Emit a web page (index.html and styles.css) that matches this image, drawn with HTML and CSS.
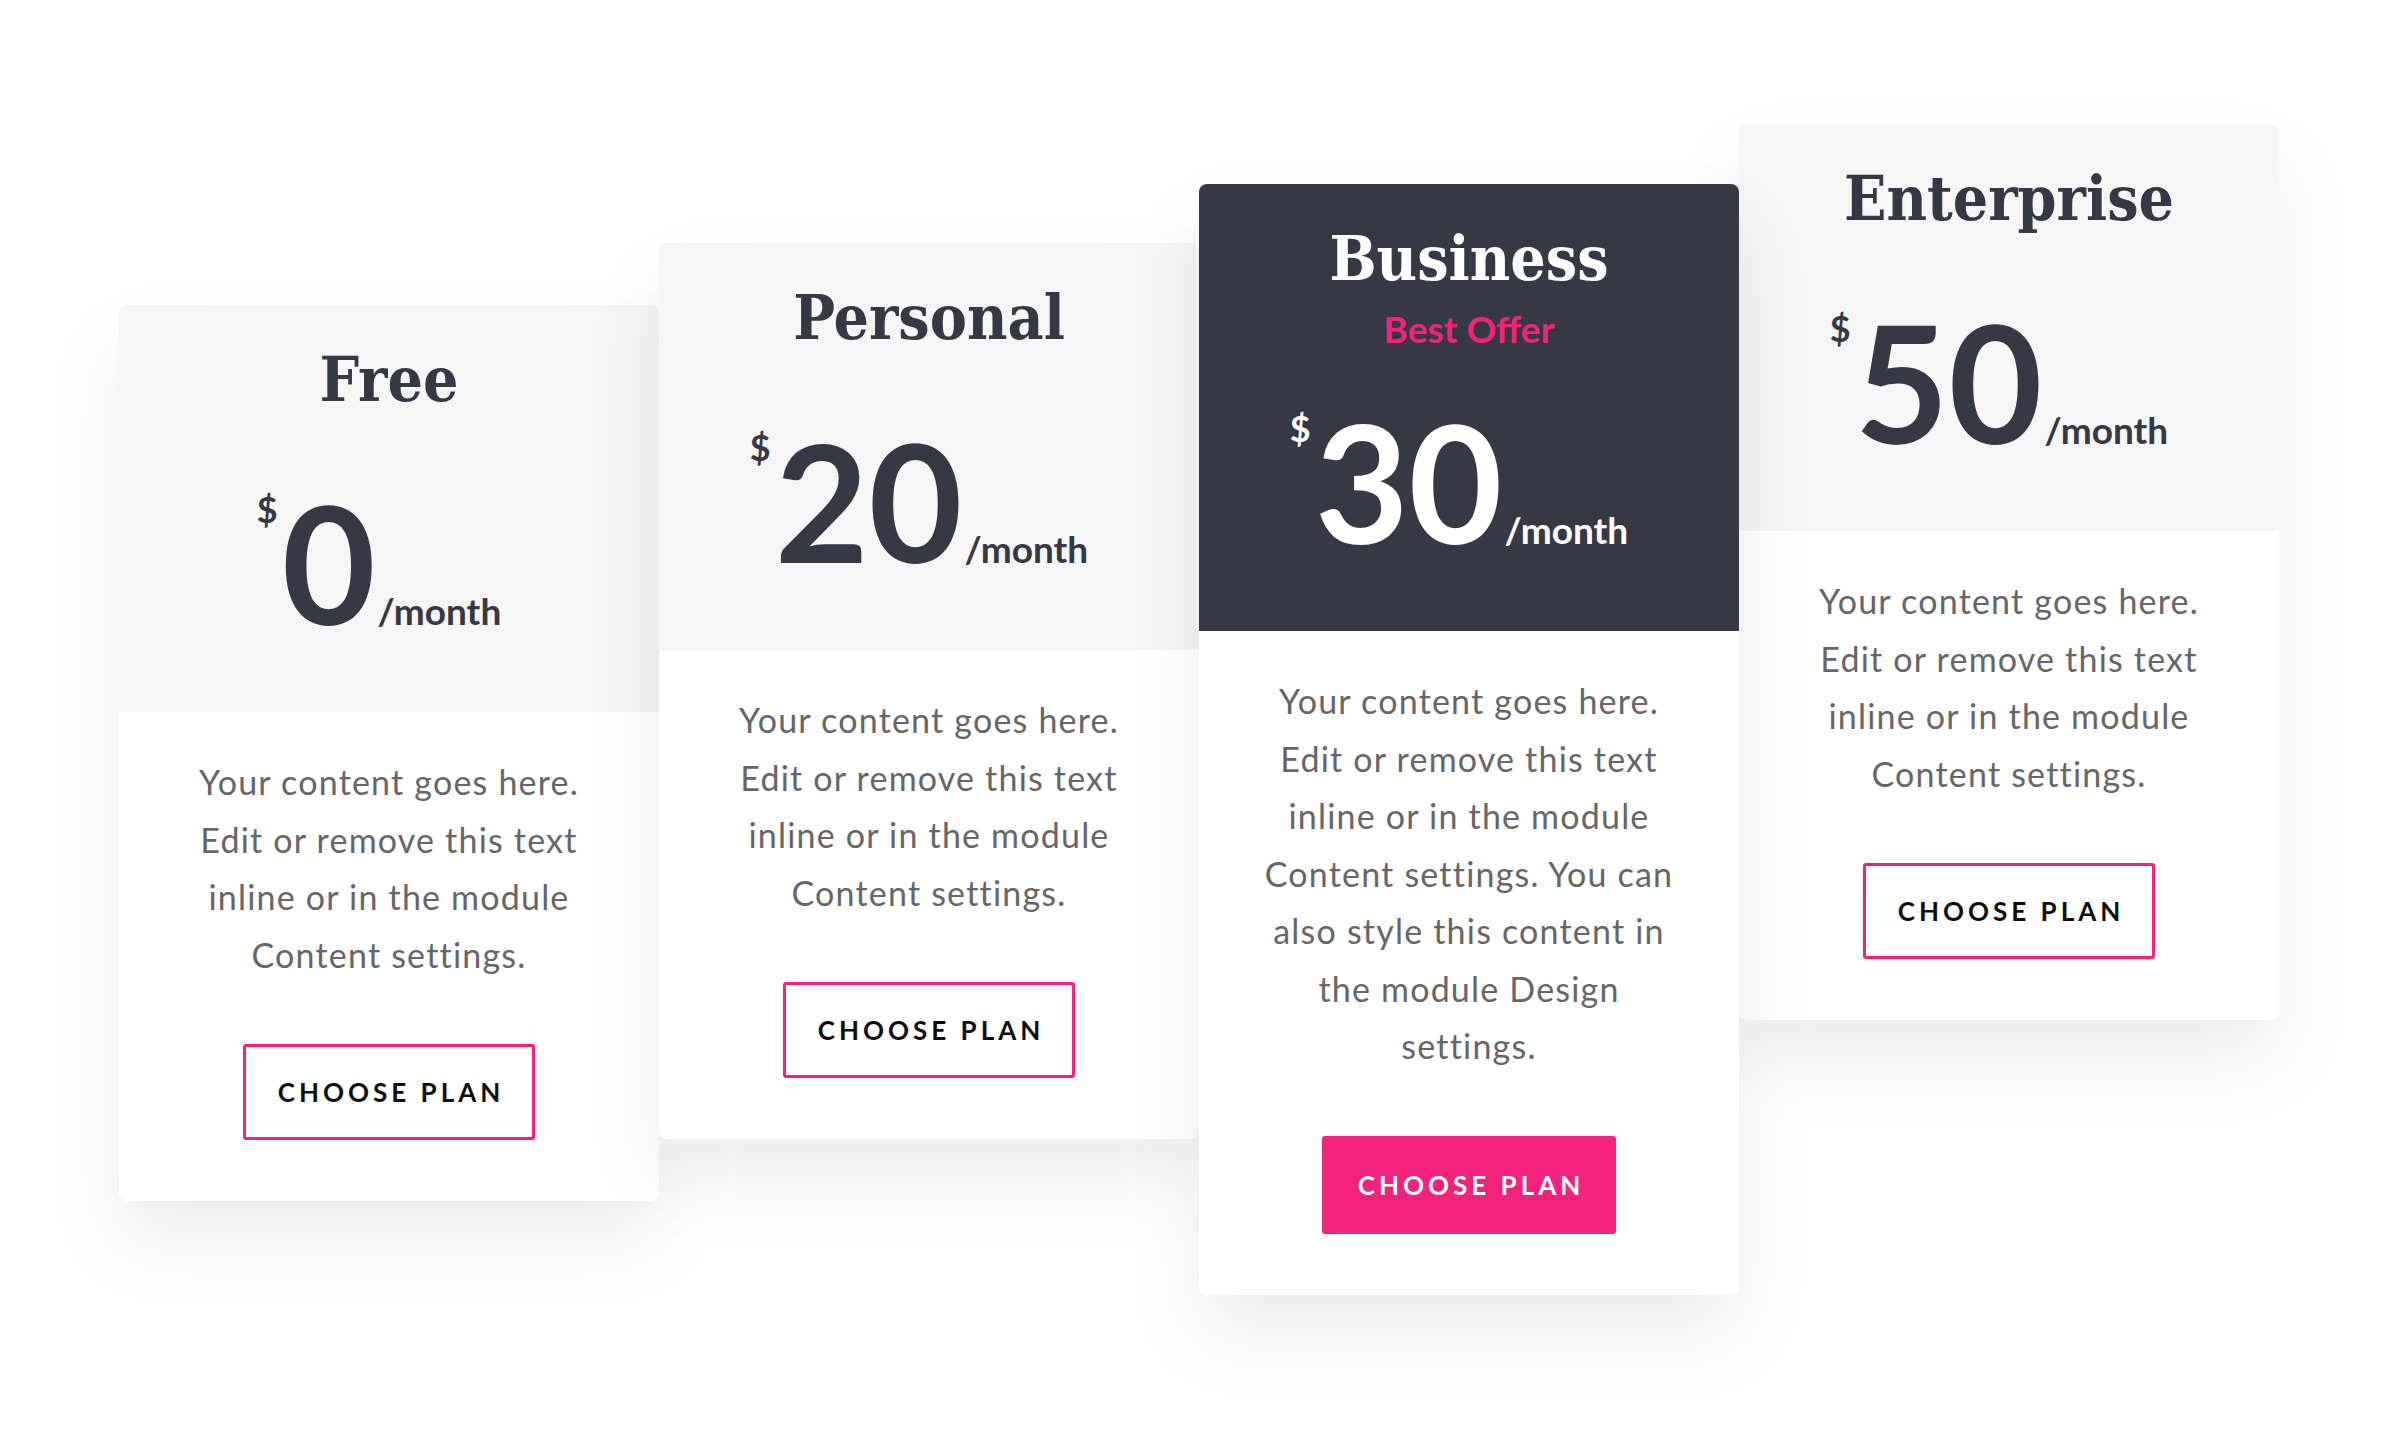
FILE: index.html
```html
<!DOCTYPE html>
<html lang="en">
<head>
<meta charset="utf-8">
<title>Pricing</title>
<link rel="stylesheet" href="styles.css">
</head>
<body>
<main class="pricing">
  <section class="card card-free">
    <header class="card-head">
      <h2 class="plan-title">Free</h2>
      <div class="price"><span class="currency">$</span><span class="amount">0</span><span class="period">/month</span></div>
    </header>
    <div class="card-body">
      <p class="desc">Your content goes here.<br>Edit or remove this text<br>inline or in the module<br>Content settings.</p>
      <a class="btn" href="#">CHOOSE PLAN</a>
    </div>
  </section>
  <section class="card card-personal">
    <header class="card-head">
      <h2 class="plan-title">Personal</h2>
      <div class="price"><span class="currency">$</span><span class="amount">20</span><span class="period">/month</span></div>
    </header>
    <div class="card-body">
      <p class="desc">Your content goes here.<br>Edit or remove this text<br>inline or in the module<br>Content settings.</p>
      <a class="btn" href="#">CHOOSE PLAN</a>
    </div>
  </section>
  <section class="card card-business featured">
    <header class="card-head">
      <h2 class="plan-title">Business</h2>
      <div class="subtitle">Best Offer</div>
      <div class="price"><span class="currency">$</span><span class="amount">30</span><span class="period">/month</span></div>
    </header>
    <div class="card-body">
      <p class="desc">Your content goes here.<br>Edit or remove this text<br>inline or in the module<br>Content settings. You can<br>also style this content in<br>the module Design<br>settings.</p>
      <a class="btn btn-filled" href="#">CHOOSE PLAN</a>
    </div>
  </section>
  <section class="card card-enterprise">
    <header class="card-head">
      <h2 class="plan-title">Enterprise</h2>
      <div class="price"><span class="currency">$</span><span class="amount">50</span><span class="period">/month</span></div>
    </header>
    <div class="card-body">
      <p class="desc">Your content goes here.<br>Edit or remove this text<br>inline or in the module<br>Content settings.</p>
      <a class="btn" href="#">CHOOSE PLAN</a>
    </div>
  </section>
</main>
</body>
</html>
```

FILE: styles.css
```css
html, body {
  margin: 0;
  padding: 0;
  background: #ffffff;
}

body {
  font-family: "Lato", "Liberation Sans", sans-serif;
  color: #363844;
}

.pricing {
  display: flex;
  align-items: flex-start;
  box-sizing: border-box;
  min-height: 100vh;
  padding: 124px 0 0 119px;
}

.card {
  width: 540px;
  flex: 0 0 540px;
  background: #ffffff;
  border-radius: 8px;
  overflow: hidden;
  box-shadow: 0 40px 80px rgba(0, 0, 0, 0.08);
  position: relative;
}

.card-free { margin-top: 181px; }
.card-personal { margin-top: 119px; }
.card-business { margin-top: 60px; z-index: 1; }
.card-enterprise { margin-top: 0; }

.card-head {
  background: #f6f6f6;
  text-align: center;
  padding: 42px 20px 69px;
}

.featured .card-head {
  background: #363844;
}

.plan-title {
  margin: 0;
  font-family: "DejaVu Serif", "Liberation Serif", serif;
  font-stretch: condensed;
  font-weight: 700;
  font-size: 62px;
  line-height: 66px;
  color: #363844;
}

.featured .plan-title {
  color: #ffffff;
}

.subtitle {
  font-family: "Lato", sans-serif;
  font-weight: 700;
  font-size: 37px;
  line-height: 40px;
  color: #f3237b;
  margin: 17px 0 -17px;
}

.price {
  display: flex;
  justify-content: center;
  align-items: baseline;
  margin-top: 70px;
  padding-right: 20px;
  color: #363844;
  font-family: "Lato", sans-serif;
  font-weight: 700;
}

.featured .price {
  color: #ffffff;
}

.currency {
  align-self: flex-start;
  font-size: 36px;
  line-height: 1;
  margin-top: 8px;
  margin-right: 4px;
}

.amount {
  font-size: 162px;
  line-height: 160px;
}

.period {
  font-size: 37px;
  line-height: 1;
  margin-left: 2px;
}

.card-body {
  padding: 41px 20px 61px;
  text-align: center;
}

.desc {
  margin: 0 0 61px;
  font-family: "Lato", sans-serif;
  font-size: 34px;
  letter-spacing: 1.2px;
  line-height: 57.5px;
  color: #666666;
}

.btn {
  display: inline-flex;
  align-items: center;
  justify-content: center;
  box-sizing: border-box;
  width: 292px;
  height: 96px;
  border: 3px solid #f3237b;
  border-radius: 3px;
  font-family: "Lato", sans-serif;
  font-weight: 700;
  font-size: 26px;
  letter-spacing: 4px;
  color: #0d0d0d;
  text-decoration: none;
  padding-left: 4px;
}

.btn-filled {
  background: #f3237b;
  color: #ffffff;
  height: 98px;
  width: 294px;
}
```
